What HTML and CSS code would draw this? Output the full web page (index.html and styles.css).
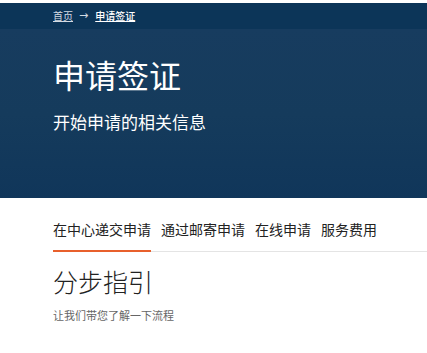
FILE: index.html
```html
<!DOCTYPE html>
<html lang="zh-CN">
<head>
<meta charset="utf-8">
<link rel="stylesheet" href="styles.css">
</head>
<body>
<div class="page">
  <nav class="crumbs">
    <a class="crumb" href="#">首页</a>
    <span class="sep">→</span>
    <a class="crumb current" href="#">申请签证</a>
  </nav>
  <header class="hero">
    <h1 class="title">申请签证</h1>
    <p class="lead">开始申请的相关信息</p>
  </header>
  <div class="tabs">
    <span class="tab active">在中心递交申请</span>
    <span class="tab">通过邮寄申请</span>
    <span class="tab">在线申请</span>
    <span class="tab">服务费用</span>
  </div>
  <section class="guide">
    <h2 class="guide-title">分步指引</h2>
    <p class="guide-sub">让我们带您了解一下流程</p>
  </section>
</div>
</body>
</html>
```
FILE: styles.css
```css
html, body {
  margin: 0;
  padding: 0;
  background: #fff;
}
body {
  font-family: "Noto Sans CJK SC", "Noto Sans", sans-serif;
}
.page {
  padding-top: 3px;
}
.crumbs {
  height: 26px;
  background: #0c3558;
  display: flex;
  align-items: center;
  padding-left: 53px;
  font-size: 10px;
  line-height: 14px;
}
.crumb {
  color: #d4dbe3;
  text-decoration: underline;
}
.crumb.current {
  color: #fff;
  font-weight: 500;
}
.sep {
  color: #d4dbe3;
  margin: 0 7px 0 6px;
  font-family: "DejaVu Sans", sans-serif;
  font-size: 11px;
}
.hero {
  height: 169px;
  box-sizing: border-box;
  background: linear-gradient(180deg, #173c5f 0%, #153b5c 50%, #10365a 100%);
  padding: 25px 0 0 53px;
  color: #fff;
}
.title {
  margin: 0;
  font-size: 32px;
  line-height: 40px;
  font-weight: 400;
}
.lead {
  margin: 16px 0 0;
  font-size: 17px;
  line-height: 24px;
}
.tabs {
  margin: 21px 0 0 53px;
  display: flex;
  gap: 10px;
  border-bottom: 1px solid #e4e4e4;
}
.tab {
  font-size: 14px;
  line-height: 20px;
  color: #222;
  padding-bottom: 11px;
  margin-bottom: -1px;
  border-bottom: 2px solid transparent;
}
.tab.active {
  border-bottom-color: #e8602c;
}
.guide {
  padding-left: 53px;
  margin-top: 13px;
}
.guide-title {
  margin: 0;
  font-size: 25px;
  line-height: 32px;
  font-weight: 300;
  color: #222;
}
.guide-sub {
  margin: 10px 0 0;
  font-size: 11px;
  line-height: 16px;
  color: #666;
}
```
